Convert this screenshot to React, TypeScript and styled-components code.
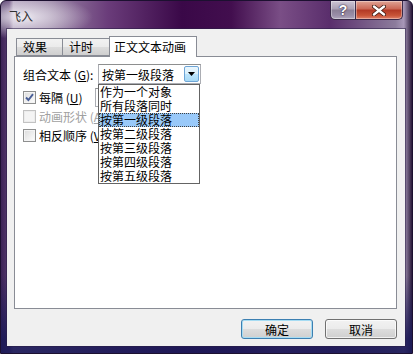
import React from 'react'
import styled, { createGlobalStyle } from 'styled-components'

const GlobalStyle = createGlobalStyle`
  html, body {
    margin: 0;
    padding: 0;
    width: 413px;
    height: 354px;
    overflow: hidden;
    background: #ffffff;
  }
  * {
    box-sizing: border-box;
  }
`

const listItems = ['作为一个对象', '所有段落同时', '按第一级段落', '按第二级段落', '按第三级段落', '按第四级段落', '按第五级段落']
const selectedItem = 2

const Window = styled.div`
  width: 413px;
  height: 354px;
  display: flex;
  flex-direction: column;
  padding: 0 7px 7px 6px;
  border: 1px solid #1c1030;
  border-radius: 6px 6px 0 0;
  font-family: 'Noto Sans CJK SC', 'Noto Sans', sans-serif;
  font-size: 12px;
  color: #000;
  background:
    radial-gradient(ellipse 70px 22px at 22px 16px, rgba(236, 232, 240, 0.95), rgba(236, 232, 240, 0) 100%),
    linear-gradient(180deg, rgba(0, 0, 0, 0) 0, rgba(0, 0, 0, 0) 78%, rgba(28, 26, 88, 0.9) 96%),
    linear-gradient(90deg, #3c2456 0, #5a3c70 2%, #b0a0bc 3%, #9a86a6 12%, #6a3c7a 26%, #3a0848 44%, #420e4e 56%, #7a4e86 68%, #5a2e6c 80%, #8c7c9c 96%, #a898b8 98%, #2a1a3a 100%);
`
const TitleBar = styled.div`
  height: 28px;
  display: flex;
  align-items: flex-start;
  flex-shrink: 0;
`
const Title = styled.div`
  margin: 6px 0 0 2px;
  line-height: 18px;
  font-size: 12px;
  color: #303030;
  text-shadow: 0 0 6px rgba(255, 255, 255, 0.9);
`
const CaptionButtons = styled.div`
  display: flex;
  margin: 0 2px 0 auto;
  height: 19px;
`
const CaptionButton = styled.div<{ $close?: boolean }>`
  width: ${({ $close }) => ($close ? 47 : 26)}px;
  height: 19px;
  display: flex;
  align-items: center;
  justify-content: center;
  border: 1px solid #3a2a48;
  border-top: none;
  border-left-width: ${({ $close }) => ($close ? 0 : 1)}px;
  border-radius: ${({ $close }) => ($close ? '0 0 5px 0' : '0 0 0 5px')};
  box-shadow: inset 0 0 0 1px rgba(255, 255, 255, 0.35);
  background: ${({ $close }) =>
    $close
      ? 'linear-gradient(180deg, #e0a496 0%, #cc6a58 42%, #b43a26 52%, #c85438 80%, #e0806a 100%)'
      : 'linear-gradient(180deg, #cdc4d4 0%, #aca2b6 42%, #8c8098 52%, #9a8ea8 80%, #b0a6bc 100%)'};
`
const HelpGlyph = styled.span`
  font-family: 'Liberation Sans', Arial, sans-serif;
  font-weight: bold;
  font-size: 14px;
  line-height: 14px;
  color: #fff;
  text-shadow: 0 0 2px #302040, 0 0 1px #302040;
`
const Client = styled.div`
  flex: 1;
  display: flex;
  flex-direction: column;
  background: #f0f0f0;
  padding: 7px 8px 7px 7px;
  box-shadow: 0 0 0 1px rgba(40, 30, 70, 0.55);
`
const TabStrip = styled.div`
  display: flex;
  align-items: flex-end;
  height: 20px;
  padding-left: 2px;
  position: relative;
  z-index: 1;
`
const Tab = styled.div<{ $active?: boolean; $width: number }>`
  width: ${({ $width }) => $width}px;
  height: ${({ $active }) => ($active ? 21 : 18)}px;
  margin-left: -1px;
  margin-bottom: ${({ $active }) => ($active ? -1 : 0)}px;
  padding-left: ${({ $active }) => ($active ? 4 : 6)}px;
  border: 1px solid #898c95;
  border-bottom: ${({ $active }) => ($active ? 'none' : '1px solid #898c95')};
  line-height: ${({ $active }) => ($active ? 19 : 16)}px;
  background: ${({ $active }) =>
    $active ? '#ffffff' : 'linear-gradient(180deg, #f2f2f2 0%, #ebebeb 50%, #dddddd 50%, #cfcfcf 100%)'};
  color: #000;
  &:first-child {
    margin-left: 0;
  }
`
const Panel = styled.div`
  height: 253px;
  background: #ffffff;
  border: 1px solid #898c95;
  padding: 7px 8px;
  display: flex;
  flex-direction: column;
`
const FieldRow = styled.div`
  display: flex;
  align-items: center;
  height: 20px;
`
const FieldLabel = styled.span`
  width: 75px;
  white-space: nowrap;
`
const ComboWrap = styled.div`
  position: relative;
  width: 103px;
  height: 20px;
`
const Combo = styled.div`
  height: 20px;
  display: flex;
  align-items: center;
  padding-left: 3px;
  border: 1px solid #abadb3;
  border-top-color: #8e8f8f;
  background: #fff;
`
const ComboText = styled.span`
  flex: 1;
  white-space: nowrap;
`
const DropButton = styled.div`
  width: 15px;
  height: 16px;
  margin-right: 1px;
  display: flex;
  align-items: center;
  justify-content: center;
  border: 1px solid #6ea5d6;
  border-radius: 2px;
  background: linear-gradient(180deg, #eaf6fd 0%, #d9f0fc 50%, #bee6fd 50%, #a7d9f5 100%);
`
const DropList = styled.div`
  position: absolute;
  top: 100%;
  left: 0;
  width: 102px;
  background: #fff;
  border: 1px solid #646464;
  z-index: 5;
`
const ListItem = styled.div<{ $selected?: boolean }>`
  height: 14px;
  line-height: 14px;
  padding-left: 1px;
  overflow: hidden;
  white-space: nowrap;
  background: ${({ $selected }) => ($selected ? '#99c9f9' : 'transparent')};
  outline: ${({ $selected }) => ($selected ? '1px dotted #404040' : 'none')};
  outline-offset: -1px;
`
const Options = styled.div`
  display: flex;
  flex-direction: column;
  margin-top: 4px;
`
const OptionRow = styled.div`
  display: flex;
  align-items: center;
  height: 19px;
`
const CheckBox = styled.div<{ $disabled?: boolean }>`
  width: 13px;
  height: 13px;
  margin-right: 3px;
  flex-shrink: 0;
  display: flex;
  align-items: center;
  justify-content: center;
  border: 1px solid ${({ $disabled }) => ($disabled ? '#c2c2c2' : '#8e8f8f')};
  background: ${({ $disabled }) =>
    $disabled ? '#f4f4f4' : 'linear-gradient(135deg, #dcdcdc 0%, #f0f0f0 60%, #ffffff 100%)'};
  box-shadow: inset 0 0 0 1px ${({ $disabled }) => ($disabled ? '#ececec' : '#f4f4f4')};
`
const OptionLabel = styled.span<{ $disabled?: boolean; $clip?: boolean }>`
  width: ${({ $clip }) => ($clip ? 59 : 56)}px;
  overflow: hidden;
  white-space: nowrap;
  color: ${({ $disabled }) => ($disabled ? '#a0a0a0' : '#000')};
`
const SpinBox = styled.div`
  width: 60px;
  height: 19px;
  border: 1px solid #abadb3;
  border-top-color: #8e8f8f;
  background: #fff;
`
const ButtonRow = styled.div`
  display: flex;
  justify-content: flex-end;
  gap: 12px;
  margin-top: 10px;
`
const DialogButton = styled.div<{ $default?: boolean }>`
  width: 72px;
  height: 20px;
  display: flex;
  align-items: center;
  justify-content: center;
  border: 1px solid ${({ $default }) => ($default ? '#3c7fb1' : '#707070')};
  border-radius: 3px;
  background: linear-gradient(180deg, #f2f2f2 0%, #ebebeb 50%, #dddddd 50%, #cfcfcf 100%);
  box-shadow: inset 0 0 0 1px ${({ $default }) => ($default ? '#a6dcf3' : 'rgba(255, 255, 255, 0.7)')};
  color: #000;
`

const CheckMark = () => (
  <svg width="9" height="9" viewBox="0 0 9 9">
    <path d="M1 4.5 L3.4 7 L8 1.2" fill="none" stroke="#4a5f97" strokeWidth="1.9" />
  </svg>
)

export default function App() {
  return (
    <>
      <GlobalStyle />
      <Window>
        <TitleBar>
          <Title>飞入</Title>
          <CaptionButtons>
            <CaptionButton>
              <HelpGlyph>?</HelpGlyph>
            </CaptionButton>
            <CaptionButton $close>
              <svg width="14" height="11" viewBox="0 0 14 11">
                <path d="M2 1.5 L12 9.5 M12 1.5 L2 9.5" stroke="#3a1810" strokeWidth="4" strokeLinecap="round" />
                <path d="M2 1.5 L12 9.5 M12 1.5 L2 9.5" stroke="#ffffff" strokeWidth="2.4" strokeLinecap="round" />
              </svg>
            </CaptionButton>
          </CaptionButtons>
        </TitleBar>
        <Client>
          <TabStrip>
            <Tab $width={47}>效果</Tab>
            <Tab $width={48}>计时</Tab>
            <Tab $active $width={88}>正文文本动画</Tab>
          </TabStrip>
          <Panel>
            <FieldRow>
              <FieldLabel>
                组合文本 (<u>G</u>):
              </FieldLabel>
              <ComboWrap>
                <Combo>
                  <ComboText>按第一级段落</ComboText>
                  <DropButton>
                    <svg width="7" height="4" viewBox="0 0 7 4">
                      <path d="M0 0 H7 L3.5 4 Z" fill="#000" />
                    </svg>
                  </DropButton>
                </Combo>
                <DropList>
                  {listItems.map((item, index) => (
                    <ListItem key={item} $selected={index === selectedItem}>
                      {item}
                    </ListItem>
                  ))}
                </DropList>
              </ComboWrap>
            </FieldRow>
            <Options>
              <OptionRow>
                <CheckBox>
                  <CheckMark />
                </CheckBox>
                <OptionLabel>
                  每隔 (<u>U</u>)
                </OptionLabel>
                <SpinBox />
              </OptionRow>
              <OptionRow>
                <CheckBox $disabled />
                <OptionLabel $disabled $clip>
                  动画形状 (<u>A</u>)
                </OptionLabel>
              </OptionRow>
              <OptionRow>
                <CheckBox />
                <OptionLabel $clip>
                  相反顺序 (<u>V</u>)
                </OptionLabel>
              </OptionRow>
            </Options>
          </Panel>
          <ButtonRow>
            <DialogButton $default>确定</DialogButton>
            <DialogButton>取消</DialogButton>
          </ButtonRow>
        </Client>
      </Window>
    </>
  )
}
